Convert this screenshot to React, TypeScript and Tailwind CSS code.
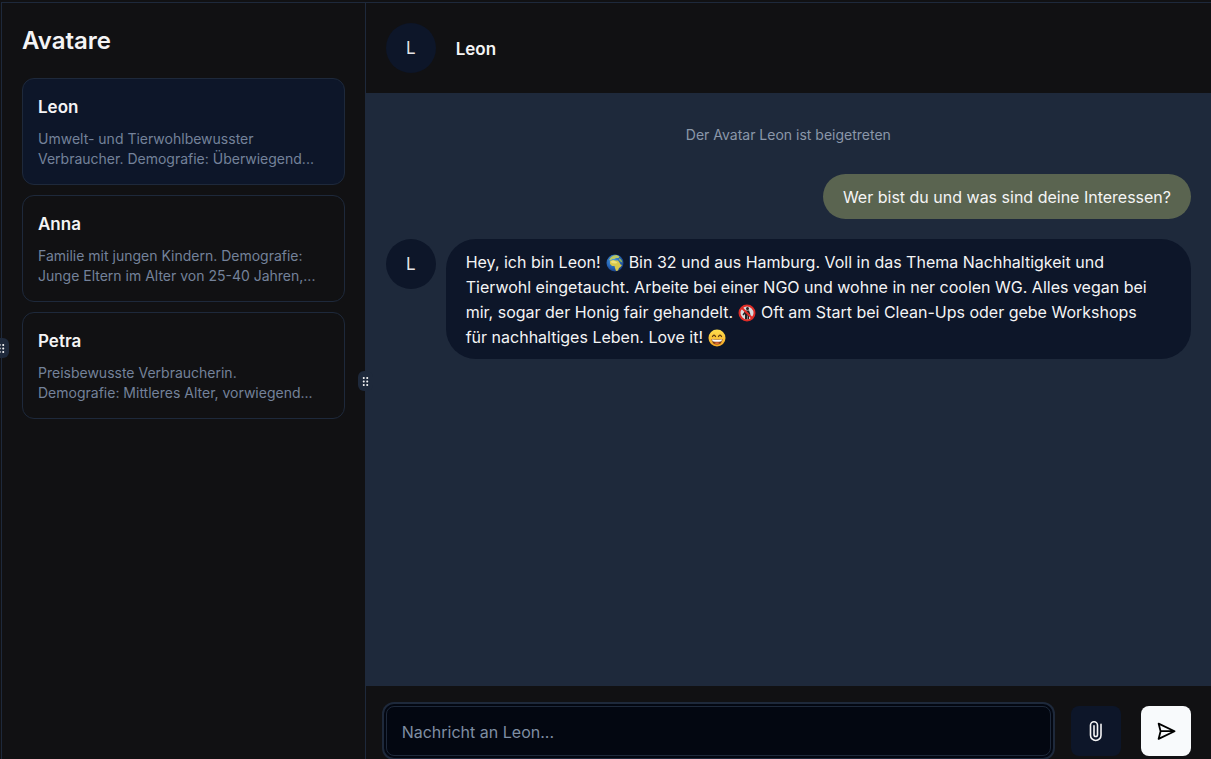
import type { ReactNode } from "react";
import { RxDragHandleDots2 } from "react-icons/rx";

const avatars = [
  { name: "Leon", lines: ["Umwelt- und Tierwohlbewusster", "Verbraucher. Demografie: Überwiegend..."] },
  { name: "Anna", lines: ["Familie mit jungen Kindern. Demografie:", "Junge Eltern im Alter von 25-40 Jahren,..."] },
  { name: "Petra", lines: ["Preisbewusste Verbraucherin.", "Demografie: Mittleres Alter, vorwiegend..."] },
];

function Initial() {
  return (
    <div className="flex size-[50px] shrink-0 items-center justify-center rounded-full bg-[#0d1629] pt-0.5 text-[17px] text-[#e4e4e7]">
      L
    </div>
  );
}

function Line({ children }: { children: ReactNode }) {
  return <span className="flex flex-wrap items-center gap-x-[5px]">{children}</span>;
}

function Globe() {
  return (
    <svg role="img" aria-label="🌍" viewBox="0 0 36 36" className="size-[18px] shrink-0">
      <defs>
        <radialGradient id="sea" cx=".4" cy=".35" r=".7">
          <stop offset="0" stopColor="#4d9fe0" />
          <stop offset=".6" stopColor="#2563b5" />
          <stop offset="1" stopColor="#173a80" />
        </radialGradient>
      </defs>
      <circle cx="18" cy="18" r="17" fill="url(#sea)" />
      <path d="M10 6l5-3 6-1 6 3-2 3-5 0-3 2-4 0-4 3-3-1z" fill="#b9c763" />
      <path d="M8 14l6-2 5 1 5 0 3 4 2 4 3 1-3 4-3 2-2 5-4 1-2-6-1-4-5 0-4-4z" fill="#d8c84c" />
      <path d="M10 14l5-1 5 2 3 3-5 1-7-1z" fill="#efe078" />
      <path d="M27 8l4 4 2 5-3-1-4-4z" fill="#8fb45c" />
    </svg>
  );
}

function Prohibited() {
  return (
    <svg role="img" aria-label="🚯" viewBox="0 0 36 36" className="size-[18px] shrink-0">
      <circle cx="18" cy="18" r="15" fill="#d9d9dc" />
      <circle cx="19" cy="9" r="3" fill="#222" />
      <path d="M15 13h7l3 8-3 1v9h-3v-8h-1v8h-4V20l-3 3-2-2z" fill="#222" />
      <circle cx="18" cy="18" r="15" fill="none" stroke="#df2c27" strokeWidth="4" />
      <path d="M7.500 7.500l21 21" stroke="#df2c27" strokeWidth="4" />
    </svg>
  );
}

function Grin() {
  return (
    <svg role="img" aria-label="😄" viewBox="0 0 36 36" className="size-[18px] shrink-0">
      <defs>
        <linearGradient id="face" x2="0" y2="1">
          <stop offset="0" stopColor="#ffe04f" />
          <stop offset="1" stopColor="#f5a623" />
        </linearGradient>
      </defs>
      <circle cx="18" cy="18" r="17" fill="url(#face)" />
      <path d="M9 15q3-6 6 0M21 15q3-6 6 0" fill="none" stroke="#5c3710" strokeWidth="2.500" strokeLinecap="round" />
      <path d="M7 20q11 2 22 0-1 11-11 11T7 20z" fill="#7a3a14" />
      <path d="M8 20.500q10 2 20 0l-1 4q-9 2-18 0z" fill="#fff" />
      <path d="M12 28q6-3 12 0-6 4-12 0z" fill="#e8703a" />
    </svg>
  );
}

function Paperclip() {
  return (
    <svg viewBox="0 0 24 24" className="size-6" fill="none" stroke="currentColor" strokeWidth="1.600" strokeLinecap="round">
      <path d="M17 5.200V16.200a5.250 5.250 0 0 1-10.500 0V6.200a3.500 3.500 0 0 1 7 0V15.800a1.750 1.750 0 0 1-3.500 0V6.800" />
    </svg>
  );
}

function Send() {
  return (
    <svg viewBox="0 0 20 20" className="size-5" fill="none" stroke="currentColor" strokeWidth="1.800" strokeLinejoin="round">
      <path d="M2.600 2.600 18.600 10.200 2.600 17.900 4.600 10.200zM4.600 10.200H18" />
    </svg>
  );
}

export default function App() {
  return (
    <div className="flex h-screen flex-col overflow-hidden bg-[#111113] font-['Inter','Liberation_Sans',sans-serif] text-[#f4f4f5]">
      <div className="h-0.5 shrink-0" />
      <div className="relative ml-px flex min-h-0 flex-1 border-t border-l border-[#1e293b]">
        <button
          aria-label="Seitenleiste anpassen"
          className="absolute top-[335px] -left-2 flex h-5 w-[15px] items-center justify-center rounded-md bg-[#1e293b]"
        >
          <RxDragHandleDots2 className="size-[13px] shrink-0" />
        </button>
        <aside className="w-[30%] shrink-0 px-5 pt-[21px]">
          <h1 className="mb-5 text-2xl leading-[34px] font-semibold">Avatare</h1>
          <ul className="flex flex-col gap-2.5">
            {avatars.map((a, i) => (
              <li key={a.name}>
                <button
                  className={`w-full rounded-xl border border-[#1e293b] px-[15px] pt-4 pb-[15px] text-left ${i === 0 ? "bg-[#0d1629]" : ""}`}
                >
                  <span className="block text-[17px] leading-[25px] font-semibold">{a.name}</span>
                  <span className="mt-[9px] block text-sm leading-5 whitespace-nowrap text-[#74829a]">
                    {a.lines[0]}
                    <br />
                    {a.lines[1]}
                  </span>
                </button>
              </li>
            ))}
          </ul>
        </aside>
        <main className="relative flex min-w-0 flex-1 flex-col border-l border-[#1e293b]">
          <button
            aria-label="Spaltenbreite anpassen"
            className="absolute top-[368px] -left-2 flex h-5 w-[15px] items-center justify-center rounded-md bg-[#1e293b]"
          >
            <RxDragHandleDots2 className="size-[13px] shrink-0" />
          </button>
          <header className="flex h-[90px] shrink-0 items-center gap-5 px-5">
            <Initial />
            <h2 className="pt-0.5 text-[17px] leading-[25px] font-semibold">Leon</h2>
          </header>
          <section className="flex min-h-0 flex-1 flex-col bg-[#1e293b] px-5 pt-8">
            <p className="text-center text-sm leading-5 text-[#8b97a9]">Der Avatar Leon ist beigetreten</p>
            <p className="mt-[29px] self-end rounded-full bg-[#5a6450] px-5 pt-[11px] pb-[9px] text-base leading-[25px]">
              Wer bist du und was sind deine Interessen?
            </p>
            <div className="mt-5 flex gap-2.5">
              <Initial />
              <div className="min-w-0 flex-1 rounded-[30px] bg-[#0d1629] px-5 pt-[11px] pb-[9px] text-base leading-[25px]">
                <Line>
                  <span>Hey, ich bin Leon!</span>
                  <Globe />
                  <span>Bin 32 und aus Hamburg. Voll in das Thema Nachhaltigkeit und</span>
                </Line>
                <Line>
                  <span>Tierwohl eingetaucht. Arbeite bei einer NGO und wohne in ner coolen WG. Alles vegan bei</span>
                </Line>
                <Line>
                  <span>mir, sogar der Honig fair gehandelt.</span>
                  <Prohibited />
                  <span>Oft am Start bei Clean-Ups oder gebe Workshops</span>
                </Line>
                <Line>
                  <span>für nachhaltiges Leben. Love it!</span>
                  <Grin />
                </Line>
              </div>
            </div>
          </section>
          <form className="flex h-[73px] shrink-0 items-start gap-5 px-5 pt-5" onSubmit={(e) => e.preventDefault()}>
            <input
              aria-label="Nachricht"
              placeholder="Nachricht an Leon..."
              className="h-[50px] min-w-0 flex-1 rounded-lg border border-[#1e293b] bg-[#030711] px-[15px] pt-0.5 text-base ring-2 ring-[#1e293b] ring-offset-2 ring-offset-[#030711] outline-none placeholder:text-[#7f8ea3]"
            />
            <button type="button" aria-label="Datei anhängen" className="flex size-[50px] shrink-0 items-center justify-center rounded-lg bg-[#0d1629]">
              <Paperclip />
            </button>
            <button type="submit" aria-label="Senden" className="flex size-[50px] shrink-0 items-center justify-center rounded-lg bg-[#f8fafc] text-black">
              <Send />
            </button>
          </form>
        </main>
      </div>
    </div>
  );
}
